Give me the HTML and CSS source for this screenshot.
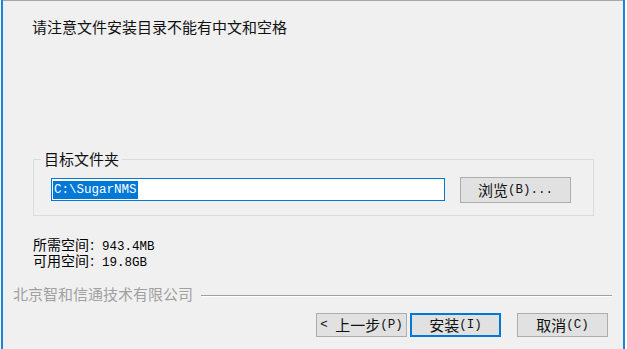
FILE: index.html
```html
<!DOCTYPE html>
<html lang="zh-CN">
<head>
<meta charset="utf-8">
<title>安装</title>
<link rel="stylesheet" href="styles.css">
</head>
<body>
<div class="frame">
  <div class="panel">
    <div class="notice">请注意文件安装目录不能有中文和空格</div>

    <div class="group">
      <div class="group-label">目标文件夹</div>
      <div class="dir-row">
        <div class="textbox"><span class="sel m">C:\SugarNMS</span></div>
        <div class="btn browse"><span class="zh">浏览</span><span class="m">(B)...</span></div>
      </div>
    </div>

    <div class="space">
      <div class="space-line"><span class="zh-s">所需空间</span><span class="m">：943.4MB</span></div>
      <div class="space-line"><span class="zh-s">可用空间</span><span class="m">：19.8GB</span></div>
    </div>

    <div class="brand-row">
      <span class="brand">北京智和信通技术有限公司</span>
      <div class="rule"></div>
    </div>

    <div class="actions">
      <div class="btn nav"><span class="m">&lt; </span><span class="zh">上一步</span><span class="m">(P)</span></div>
      <div class="btn nav default"><span class="zh">安装</span><span class="m">(I)</span></div>
      <div class="btn nav cancel"><span class="zh">取消</span><span class="m">(C)</span></div>
    </div>
  </div>
</div>
</body>
</html>
```

FILE: styles.css
```css
html, body {
  margin: 0;
  padding: 0;
  background: #ffffff;
}

body {
  width: 627px;
  height: 349px;
  overflow: hidden;
  font-family: "Noto Sans CJK SC", "Noto Sans", sans-serif;
  color: #000;
}

.frame {
  margin: 0 2px 0 1px;
  height: 349px;
  border-left: 2px solid #1a84d8;
  border-right: 2px solid #1a84d8;
  background: #f0f0f0;
}

.panel {
  height: 348px;
  border-top: 1px solid #a8a8a8;
  display: flex;
  flex-direction: column;
}

.zh {
  font-family: "Noto Sans CJK SC", sans-serif;
  font-size: 15px;
}

.zh-s {
  font-family: "Noto Sans CJK SC", sans-serif;
  font-size: 14px;
}

.m {
  font-family: "Liberation Mono", monospace;
  font-size: 12.5px;
}

.notice {
  margin: 16px 0 0 29px;
  font-size: 15px;
  line-height: 20px;
  color: #111;
}

.group {
  position: relative;
  margin: 122px 0 0 30px;
  width: 561px;
  height: 57px;
  box-sizing: border-box;
  border: 1px solid #dcdcdc;
}

.group-label {
  position: absolute;
  top: -11px;
  left: 7px;
  padding: 0 3px;
  background: #f0f0f0;
  font-size: 15px;
  line-height: 20px;
  color: #111;
}

.dir-row {
  display: flex;
  align-items: center;
  gap: 15px;
  margin: 16px 0 0 17px;
  height: 27px;
}

.textbox {
  width: 394px;
  height: 23px;
  box-sizing: border-box;
  border: 1px solid #0078d7;
  background: #fff;
  display: flex;
  align-items: center;
  padding-left: 1px;
}

.sel {
  background: #0078d7;
  color: #fff;
  line-height: 18px;
  padding: 0 1px;
}

.btn {
  box-sizing: border-box;
  background: #e1e1e1;
  border: 1px solid #adadad;
  display: flex;
  align-items: center;
  justify-content: center;
  color: #111;
  line-height: 20px;
}

.browse {
  width: 111px;
  height: 26px;
}

.space {
  margin: 19px 0 0 30px;
}

.space-line {
  height: 16px;
  line-height: 16px;
  white-space: pre;
}

.space-line span {
  line-height: 16px;
}

.brand-row {
  display: flex;
  align-items: center;
  margin-top: 17px;
  height: 20px;
}

.brand {
  margin-left: 10px;
  font-size: 15px;
  line-height: 20px;
  color: #a0a0a0;
}

.rule {
  flex: 1;
  margin: 4px 11px 0 8px;
  height: 0;
  border-top: 1px solid #a0a0a0;
  border-bottom: 1px solid #ffffff;
}

.actions {
  display: flex;
  justify-content: flex-end;
  margin: 9px 15px 0 0;
}

.nav {
  width: 91px;
  height: 24px;
  white-space: pre;
}

.default {
  margin-left: 3px;
  border: 2px solid #0078d7;
}

.cancel {
  margin-left: 16px;
}
```
